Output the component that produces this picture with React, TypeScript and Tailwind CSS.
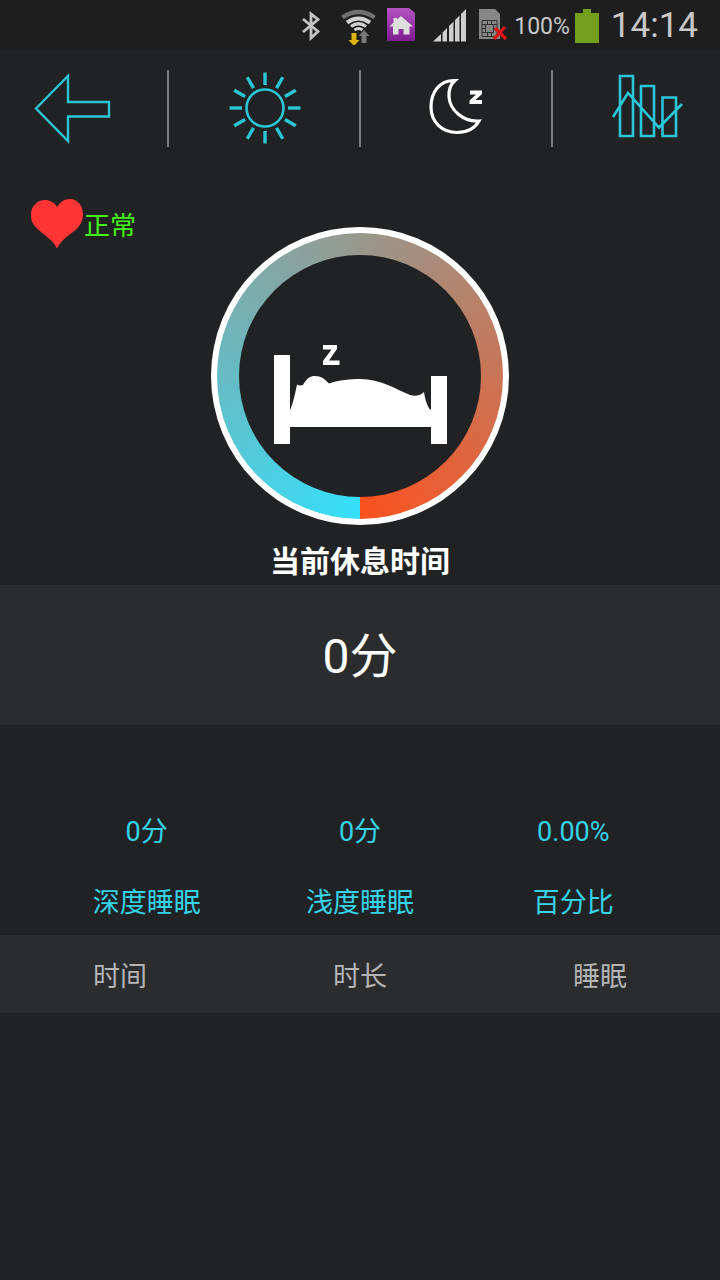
import type { ReactNode } from "react";

const CYAN = "#2bc5d8";

function StatusBar() {
  return (
    <header className="flex h-[50px] items-center justify-end bg-[#1e1e1e] pr-[22px] text-[#c8c8c8]">
      <svg width="20" height="32" viewBox="0 0 20 32" fill="none" stroke="#c4c4c4" strokeWidth="2.8" role="img" aria-label="Bluetooth">
        <path d="M2 10 17 22.500 10 29V5L17 10.500 2 23" />
      </svg>
      <svg className="ml-5" width="36" height="40" viewBox="0 0 36 40" role="img" aria-label="Wi-Fi">
        <g fill="none">
          <path d="M1.500 12.500Q17.500 1.500 33.500 12.500" stroke="#707070" strokeWidth="4.500" />
          <path d="M6 17.500Q17.500 9.500 29 17.500" stroke="#d2d2d2" strokeWidth="4" />
          <path d="M10 21.500Q17.500 16 25 21.500" stroke="#d2d2d2" strokeWidth="3.400" />
          <path d="M13.500 25Q17.500 22 21.500 25" stroke="#d2d2d2" strokeWidth="3" />
        </g>
        <path d="M10.500 28h5v7h3L13 41 7.500 35h3z" fill="#e0b30c" />
        <path d="M20.500 38v-7H17.500l5.500-6 5.500 6h-3v7z" fill="#777" />
      </svg>
      <svg className="ml-[10px]" width="28" height="34" viewBox="0 0 28 34" role="img" aria-label="Home">
        <defs>
          <linearGradient id="home-fill" x1="0" y1="0" x2="0" y2="1">
            <stop offset="0" stopColor="#b253c0" />
            <stop offset="1" stopColor="#7d1d91" />
          </linearGradient>
        </defs>
        <path d="M0 0h22l6 5v28H0z" fill="url(#home-fill)" />
        <path d="M14 8 26 18.500H22.500v8H16.500V21h-5v5.500H6V18.500H2.500L6.500 14.500V10h3.500v1.500z" fill="#dedede" />
      </svg>
      <svg className="ml-[18px]" width="34" height="34" viewBox="0 0 34 34" fill="#cecece" role="img" aria-label="Signal strength">
        <path d="M0 33.500 8 26V33.500zM9.500 24.500 14 20V33.500H9.500zM16 18 20.500 13.500V33.500H16zM22 12 26.500 7.500V33.500H22zM28 6 33 1V33.500H28z" />
      </svg>
      <svg className="ml-[11px]" width="30" height="34" viewBox="0 0 30 34" role="img" aria-label="No SIM card">
        <path d="M1 1h16l5 5v25H1z" fill="#878787" />
        <path d="M4 12.500h15v16H4zM7.500 16.500h8v8h-8zM4 16.500h3.500M4 20.500h3.500M4 24.500h3.500M15.500 16.500h3.500M15.500 20.500h3.500M9.500 12.500v4M13.500 12.500v4M9.500 24.500v4M13.500 24.500v4" fill="none" stroke="#303030" strokeWidth="1" />
        <path d="m17 20 11 11M27 19 16 31" stroke="#dc1414" strokeWidth="3.200" />
      </svg>
      <span className="ml-[6px] pt-[3px] text-[23px] leading-8">100%</span>
      <svg className="ml-[5px]" width="24" height="36" viewBox="0 0 24 36" fill="#719f19" role="img" aria-label="Battery full">
        <path d="M8 2h8v4h8v30H0V6h8z" />
      </svg>
      <time className="ml-3 pt-[2px] text-[35px] leading-10">14:14</time>
    </header>
  );
}

function NavButton({ label, className = "", divider = true, children }: {
  label: string;
  className?: string;
  divider?: boolean;
  children: ReactNode;
}) {
  return (
    <div className="flex items-center">
      <button type="button" aria-label={label} className={`flex h-full flex-1 items-center justify-center ${className}`}>
        {children}
      </button>
      {divider && <span className="-mr-px h-[77px] w-[2px] bg-[#7b7c82]" />}
    </div>
  );
}

function NavBar() {
  return (
    <nav className="grid h-[116px] grid-cols-[7fr_8fr_8fr_7fr]">
      <NavButton label="返回" className="pr-[22px]">
        <svg width="78" height="72" viewBox="0 0 78 72" fill="none" stroke={CYAN} strokeWidth="2.400">
          <path d="M2 36.500 34 4V30H75V44.500H34V69z" />
        </svg>
      </NavButton>
      <NavButton label="日间" className="pl-[2px]">
        <svg width="72" height="72" viewBox="-36 -36 72 72" fill="none" stroke={CYAN}>
          <circle r="18.500" strokeWidth="2.600" />
          {[0, 30, 60, 90, 120, 150, 180, 210, 240, 270, 300, 330].map((angle) => (
            <path key={angle} d="M0 -23V-35.500" strokeWidth="3.400" transform={`rotate(${angle})`} />
          ))}
        </svg>
      </NavButton>
      <NavButton label="睡眠">
        <svg width="56" height="60" viewBox="0 0 56 60" fill="none" stroke="#fff">
          <path d="M27 2.500C11 2 3 15 3 29C3 44 14 54.500 29 54.500C39 54.500 47 50 51 43C35 44 22 32 21 19C20.500 12 23 6 27 2.500Z" strokeWidth="3.200" />
          <path d="M42 12.500h12v3.500L47.500 22H54V26H41.500V22.500L48 16.500H42z" fill="#fff" stroke="none" />
        </svg>
      </NavButton>
      <NavButton label="统计" className="pl-6" divider={false}>
        <svg width="72" height="68" viewBox="0 0 72 68" fill="none" stroke={CYAN} strokeWidth="2.600">
          <path d="M8 2H21V62H8zM29 12H42V62H29zM50.500 23.500H64V62H50.500zM1 43 16 19 47 53.500 70 30" />
        </svg>
      </NavButton>
    </nav>
  );
}

function SleepDial() {
  return (
    <div className="rounded-full bg-white p-[6px]">
      <div className="rounded-full bg-[conic-gradient(from_180deg,#35dffb,#fb511f)] p-[22px]">
        <div className="flex size-[242px] items-center justify-center rounded-full bg-[#212224]">
          <svg width="174" height="140" viewBox="0 0 174 140" fill="#fff" role="img" aria-label="睡眠">
            <path d="M50 39h14v4L56 54.500H66.500V59H50V55L58.500 43.500H50z" />
            <path d="M1 49H17V104C20 98 22 88 24 78.500Q27 80 30 79C34 72 37 70 42 70C48 70 52 73 56 77.500C66 74 78 73 87 73C108 73 122 83 137 89C142 90.500 148 89.500 151 86C152 93 154 100 157 103.500H158V70H174V138H158V121H17V138H1z" />
          </svg>
        </div>
      </div>
    </div>
  );
}

const stats = [
  { label: "深度睡眠", value: "0分" },
  { label: "浅度睡眠", value: "0分" },
  { label: "百分比", value: "0.00%" },
];

export default function App() {
  return (
    <div className="min-h-screen bg-[#212224] font-[Roboto,'Noto_Sans_CJK_SC',sans-serif] text-white">
      <StatusBar />
      <NavBar />
      <main>
        <section className="grid grid-cols-[1fr_auto_1fr] pt-[30px]">
          <div className="flex items-start pl-[30px]">
            <svg width="54" height="54" viewBox="0 0 54 54" fill="#ff3535" aria-hidden="true">
              <path d="M27 52.500C23 44 15 40 8 33.500C3 29 1 25 1 19C1 10 7 4 15 4C20 4 24 6 27 11C30 6 34 3 40 3C48 3 53 10 53 18C53 25 50 30 45 34.500C38 40 31 44 27 52.500Z" />
            </svg>
            <span className="pt-3 text-[26px] leading-9 text-[#44f514]">正常</span>
          </div>
          <div className="pt-[31px]">
            <SleepDial />
          </div>
        </section>
        <h1 className="pt-[17px] pb-[3px] text-center text-[30px] leading-10 font-bold">当前休息时间</h1>
        <p className="bg-[#2b2c2e] pt-[42px] pb-[38px] text-center text-[48px] leading-[60px]">0分</p>
        <dl className="grid grid-cols-3 px-10 pt-[87px] pb-3 text-center text-[27px] leading-10 text-[#35d3e8]">
          {stats.map((stat) => (
            <div key={stat.label} className="flex flex-col-reverse gap-[31px]">
              <dt>{stat.label}</dt>
              <dd>{stat.value}</dd>
            </div>
          ))}
        </dl>
        <table className="w-full table-fixed bg-[#2b2c2e] text-[27px] leading-[72px] text-[#b4b4b5]">
          <thead>
            <tr>
              <th scope="col" className="pt-[6px] font-normal">时间</th>
              <th scope="col" className="pt-[6px] font-normal">时长</th>
              <th scope="col" className="pt-[6px] font-normal">睡眠</th>
            </tr>
          </thead>
        </table>
      </main>
    </div>
  );
}
